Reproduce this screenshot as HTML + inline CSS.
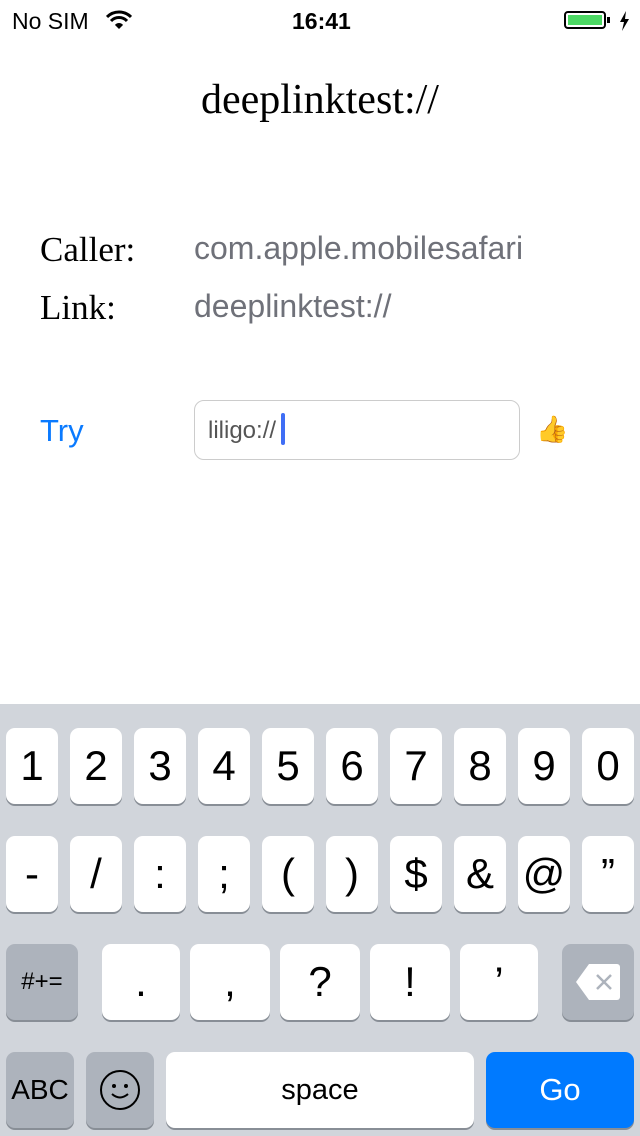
<!DOCTYPE html><html><head><style>
body{margin:0;width:640px;height:1136px;position:relative;background:#fff;font-family:"Liberation Sans",sans-serif;overflow:hidden}
.a{position:absolute}
.kb{position:absolute;left:0;top:704px;width:640px;height:432px;background:#d1d5db}
.k{position:absolute;background:#fff;border-radius:9px;box-shadow:0 2px 0 #888e96;display:flex;align-items:center;justify-content:center;font-size:42px;color:#000;height:76px}
.g{background:#adb3bc}
</style></head><body>
<div class="a" style="left:12px;top:8px;font-size:23px">No SIM</div>
<svg class="a" style="left:106px;top:10px" width="26" height="20" viewBox="0 0 26 20"><path d="M1 7a17 17 0 0 1 24 0" stroke="#000" stroke-width="3" fill="none"/><path d="M5 11a11 11 0 0 1 16 0" stroke="#000" stroke-width="3" fill="none"/><path d="M9 15a5 5 0 0 1 8 0L13 19z" fill="#000"/></svg>
<div class="a" style="left:292px;top:8px;font-size:23px;font-weight:bold">16:41</div>
<div class="a" style="left:564px;top:11px;width:42px;height:18px;border:2px solid #000;border-radius:4px;box-sizing:border-box;padding:2px"><div style="background:#4cd964;width:100%;height:100%"></div></div>
<div class="a" style="left:607px;top:17px;width:3px;height:6px;background:#000"></div>
<svg class="a" style="left:618px;top:11px" width="12" height="20" viewBox="0 0 12 20"><path d="M8 0L2 11h4L4 20l7-12H7z" fill="#000"/></svg>
<div class="a" style="left:0;width:640px;top:76px;text-align:center;font-family:'Liberation Serif',serif;font-size:42px">deeplinktest://</div>
<div class="a" style="left:40px;top:230px;font-family:'Liberation Serif',serif;font-size:35px">Caller:</div>
<div class="a" style="left:40px;top:288px;font-family:'Liberation Serif',serif;font-size:35px">Link:</div>
<div class="a" style="left:194px;top:230px;font-size:32px;color:#6f7179">com.apple.mobilesafari</div>
<div class="a" style="left:194px;top:288px;font-size:32px;color:#6f7179">deeplinktest://</div>
<div class="a" style="left:40px;top:413px;font-size:31px;color:#0a7aff">Try</div>
<div class="a" style="left:194px;top:400px;width:326px;height:60px;border:1px solid #ccc;border-radius:10px;box-sizing:border-box"></div>
<div class="a" style="left:208px;top:417px;font-size:24px;color:#555">liligo://</div>
<div class="a" style="left:281px;top:413px;width:4px;height:32px;background:#3f6ef5;border-radius:2px"></div>
<div class="a" style="left:536px;top:414px;font-size:26px">👍</div>
<div class="kb"></div>
<div class="k" style="left:6px;top:728px;width:52px">1</div><div class="k" style="left:70px;top:728px;width:52px">2</div><div class="k" style="left:134px;top:728px;width:52px">3</div><div class="k" style="left:198px;top:728px;width:52px">4</div><div class="k" style="left:262px;top:728px;width:52px">5</div><div class="k" style="left:326px;top:728px;width:52px">6</div><div class="k" style="left:390px;top:728px;width:52px">7</div><div class="k" style="left:454px;top:728px;width:52px">8</div><div class="k" style="left:518px;top:728px;width:52px">9</div><div class="k" style="left:582px;top:728px;width:52px">0</div>
<div class="k" style="left:6px;top:836px;width:52px">-</div><div class="k" style="left:70px;top:836px;width:52px">/</div><div class="k" style="left:134px;top:836px;width:52px">:</div><div class="k" style="left:198px;top:836px;width:52px">;</div><div class="k" style="left:262px;top:836px;width:52px">(</div><div class="k" style="left:326px;top:836px;width:52px">)</div><div class="k" style="left:390px;top:836px;width:52px">$</div><div class="k" style="left:454px;top:836px;width:52px">&amp;</div><div class="k" style="left:518px;top:836px;width:52px">@</div><div class="k" style="left:582px;top:836px;width:52px">”</div>
<div class="k g" style="left:6px;top:944px;width:72px;font-size:24px">#+=</div>
<div class="k" style="left:102px;top:944px;width:78px">.</div><div class="k" style="left:190px;top:944px;width:80px">,</div><div class="k" style="left:280px;top:944px;width:80px">?</div><div class="k" style="left:370px;top:944px;width:80px">!</div><div class="k" style="left:460px;top:944px;width:78px">’</div>
<div class="k g" style="left:562px;top:944px;width:72px"><svg width="46" height="38" viewBox="0 0 46 38"><path d="M14 1H42a3 3 0 0 1 3 3V34a3 3 0 0 1-3 3H14L1 19z" fill="#fff"/><path d="M22 12l14 14M36 12L22 26" stroke="#adb3bc" stroke-width="2.5"/></svg></div>
<div class="k g" style="left:6px;top:1052px;width:68px;font-size:28px">ABC</div>
<div class="k g" style="left:86px;top:1052px;width:68px"><svg width="42" height="42" viewBox="0 0 42 42"><circle cx="21" cy="21" r="19" stroke="#000" stroke-width="2" fill="none"/><circle cx="15" cy="17" r="2"/><circle cx="27" cy="17" r="2"/><path d="M13 25q8 7 16 0" stroke="#000" stroke-width="2" fill="none"/></svg></div>
<div class="k" style="left:166px;top:1052px;width:308px;font-size:29px">space</div>
<div class="k" style="left:486px;top:1052px;width:148px;background:#007aff;color:#fff;font-size:31px">Go</div>
</body></html>
